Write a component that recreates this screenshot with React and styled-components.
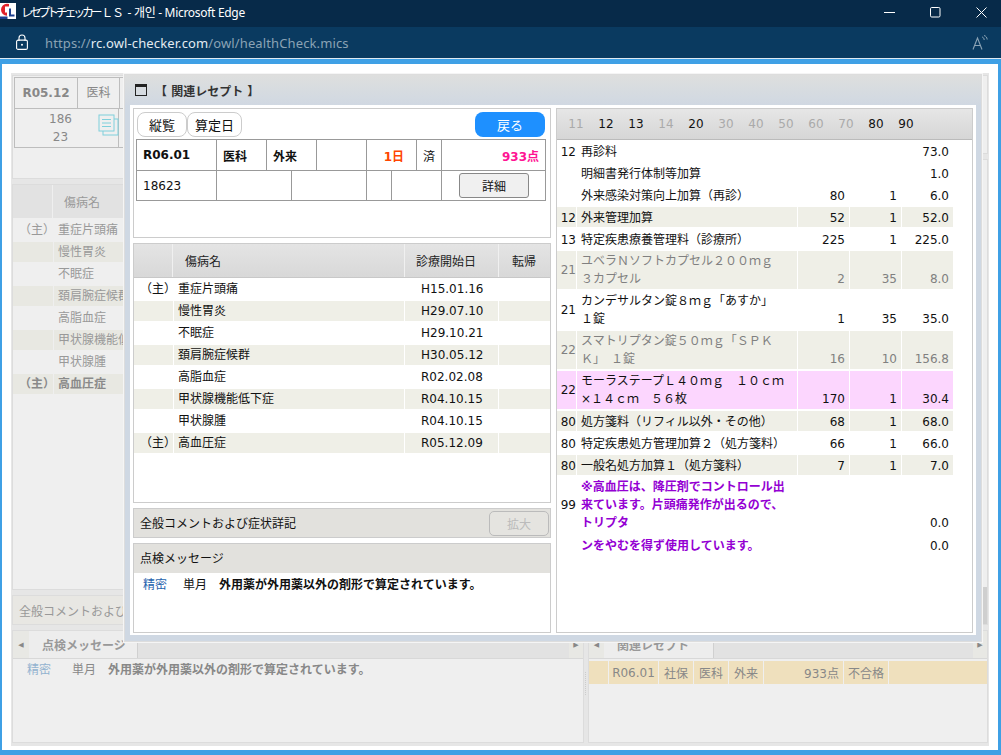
import React from "react";
import styled, { createGlobalStyle } from "styled-components";

const Global = createGlobalStyle`
  html, body { margin: 0; padding: 0; height: 755px; overflow: hidden; background: #fff; }
  #root { height: 755px; }
  * { box-sizing: border-box; }
  body { font-family: "DejaVu Sans", "Noto Sans CJK JP", sans-serif; font-size: 12px; color: #111; }
`;

const Shell = styled.div`display:flex;flex-direction:column;height:755px;`;
const TitleBar = styled.div`height:27px;background:#072a49;display:flex;align-items:center;color:#fff;flex:none;padding-bottom:3px;`;
const Logo = styled.svg`width:16px;height:16px;margin:0 5px 2px 0;flex:none;`;
const TitleText = styled.div`font:12px "Noto Sans","Noto Sans CJK JP","Noto Sans CJK KR",sans-serif;flex:1;white-space:pre;letter-spacing:-.3px;`;
const TitleJa = styled.span`letter-spacing:-3.3px;`;
const TitleMid = styled.span`letter-spacing:-2.2px;margin-left:1px;margin-right:2px;`;
const WinControls = styled.div`display:flex;align-items:center;padding-right:14px;gap:35px;`;
const WinBtn = styled.svg`width:11px;height:11px;display:block;`;
const AddressBar = styled.div`height:31px;background:#0a3a60;display:flex;align-items:center;flex:none;padding-left:16px;`;
const Lock = styled.svg`width:12px;height:16px;margin:0 17px 2px 0;flex:none;`;
const Url = styled.div`font:13px "Noto Sans",sans-serif;color:#8ba3b5;flex:1;letter-spacing:.12px;`;
const UrlHost = styled.span`color:#e3ebf1;`;
const ReadAloud = styled.svg`width:16px;height:15px;margin-right:13px;`;
const WhiteLine = styled.div`height:1px;background:#dfe9f1;flex:none;`;
const Frame = styled.div`
  position:relative;flex:1;min-height:0;background:#fff;
  border-style:solid;border-color:#3fa0e5;border-width:5px 3px 5px 2px;
  padding:9px 9px 4px 9px;
`;
const BackPage = styled.div`
  height:100%;background:#e6e6e6;padding:2px 1px 3px 1px;
  display:grid;grid-template-columns:572px 400px;column-gap:4px;
`;
const BackColumn = styled.div`display:flex;flex-direction:column;gap:5px;min-height:0;`;
const BackCard = styled.div`background:#efefef;border:1px solid #dcdcdc;position:relative;overflow:hidden;flex:${p=>p.$grow?1:"none"};height:${p=>p.$h?`${p.$h}px`:"auto"};`;
const SummaryGrid = styled.div`display:grid;border:solid #bdbdbd;border-width:1px;margin:1px;color:#888;`;
const SummaryRow = styled.div`display:grid;grid-template-columns:${p=>p.$cols};height:${p=>p.$h}px;border-top:${p=>p.$top?"1px solid #bdbdbd":"none"};`;
const SummaryCell = styled.div`
  border-right:1px solid #bdbdbd;display:flex;align-items:center;justify-content:${p=>p.$center?"center":"flex-start"};
  font-weight:${p=>p.$bold?700:400};white-space:nowrap;position:relative;line-height:18px;
`;
const Stacked = styled.div`padding-left:29px;text-align:center;width:62px;`;
const DocIcon = styled.svg`position:absolute;left:83px;top:5px;width:21px;height:22px;`;
const BackHead = styled.div`display:grid;grid-template-columns:40px 1fr;height:33px;background:#e2e2e2;color:#999;`;
const BackHeadCell = styled.div`border-right:1px solid #efefef;display:flex;align-items:center;padding-left:11px;`;
const BackRows = styled.div`display:flex;flex-direction:column;gap:2px;padding-top:2px;`;
const BackRow = styled.div`display:grid;grid-template-columns:40px 1fr;height:20px;gap:1px;line-height:20px;color:#999;`;
const BackCell = styled.div`background:${p=>p.$band?"#e8e8e2":"transparent"};white-space:nowrap;padding-left:${p=>p.$pad||0}px;font-weight:${p=>p.$bold?700:400};color:${p=>p.$bold?"#8a8a8a":"inherit"};`;
const BarText = styled.div`height:28px;padding-left:6px;display:flex;align-items:center;color:#999;white-space:nowrap;background:#e8e7e3;`;
const BackScroll = styled.div`position:absolute;right:0;bottom:0;width:5px;height:37px;background:#cfcfcf;`;
const TabPanel = styled.div`flex:none;height:113px;background:#efefef;border:1px solid #dcdcdc;display:flex;flex-direction:column;min-height:0;`;
const TabStrip = styled.div`height:28px;background:#e2e2e2;display:flex;flex:none;border-bottom:1px solid #d8d8d8;color:#999;`;
const Arrow = styled.div`width:${p=>p.$w||16}px;flex:none;display:flex;align-items:center;justify-content:center;background:#e8e8e4;color:#888;font-size:7px;`;
const Tab = styled.div`width:${p=>p.$w}px;background:#ededed;border-right:1px solid #d0d0d0;padding-left:13px;display:flex;align-items:center;font-weight:700;color:#999;white-space:nowrap;overflow:hidden;`;
const StripFill = styled.div`flex:1;`;
const BackMessage = styled.div`display:flex;padding:4px 0 0 14px;line-height:14px;color:#888;white-space:nowrap;`;
const MsgLevel = styled.span`color:${p=>p.$c};width:${p=>p.$w}px;flex:none;`;
const MsgTerm = styled.span`width:${p=>p.$w}px;flex:none;`;
const MsgBody = styled.span`font-weight:700;`;
const ReceiptRow = styled.div`display:grid;grid-template-columns:19px 49px 34px 34px 34px 79px 44px 1fr;gap:1px;height:23px;margin-top:2px;color:#888;`;
const ReceiptCell = styled.div`background:#efe0bd;display:flex;align-items:center;justify-content:${p=>p.$right?"flex-end":"center"};padding-right:${p=>p.$right?4:0}px;white-space:nowrap;`;
const Splitter = styled.div`position:absolute;left:583px;top:608px;width:1px;height:23px;border-left:1px dotted #ccc;`;

const Modal = styled.div`
  position:absolute;left:122px;top:10px;width:858px;height:568px;
  background:#cfd8e3;border:1px solid #ddd;display:flex;flex-direction:column;padding:0 5px 6px 5px;
  box-shadow:0 0 0 1px #f5f5f5;
`;
const ModalHead = styled.div`
  margin:0 -5px;height:30px;flex:none;padding-left:10px;display:flex;align-items:center;gap:8px;
  background:linear-gradient(#dedfde,#d0d8e2);font-weight:700;color:#333;
`;
const WinIcon = styled.svg`width:12px;height:12px;flex:none;`;
const ModalBody = styled.div`flex:1;min-height:0;background:#fff;padding:3px 3px 2px;display:grid;grid-template-columns:418px 417px;column-gap:5px;`;
const LeftPane = styled.div`display:flex;flex-direction:column;gap:5px;min-height:0;`;
const Panel = styled.div`border:1px solid #ccc;background:#fff;flex:${p=>p.$grow?1:"none"};height:${p=>p.$h?`${p.$h}px`:"auto"};display:flex;flex-direction:column;min-height:0;`;
const ButtonRow = styled.div`height:30px;flex:none;display:flex;align-items:flex-start;padding:3px 5px 0 3px;`;
const Pill = styled.button`
  height:25px;width:${p=>p.$w}px;border:1px solid #ccc;border-radius:8px;background:#fff;font:13px "Noto Sans CJK JP",sans-serif;color:#111;padding:0;
`;
const BackButton = styled.button`
  margin-left:auto;width:70px;height:25px;border:0;border-radius:8px;background:#1e90ff;color:#fff;font:13px "Noto Sans CJK JP",sans-serif;padding:0;
`;
const InfoTable = styled.div`margin:0 4px 0 2px;border:1px solid #999;`;
const InfoRow = styled.div`display:grid;grid-template-columns:${p=>p.$cols};height:${p=>p.$h}px;border-top:${p=>p.$top?"1px solid #999":"none"};`;
const InfoCell = styled.div`
  border-right:${p=>p.$last?"none":"1px solid #999"};display:flex;align-items:center;white-space:nowrap;
  padding:${p=>p.$right?`0 ${p.$pr||6}px 0 0`:"0 0 0 6px"};justify-content:${p=>p.$right?"flex-end":"flex-start"};
  font-weight:${p=>p.$bold?700:400};color:${p=>p.$c||"#111"};
`;
const DetailBtn = styled.button`width:70px;height:25px;margin-right:11px;background:#f0f0f0;border:1px solid #888;border-radius:3px;font:12px "Noto Sans CJK JP",sans-serif;color:#111;padding:0;`;
const DiseaseHead = styled.div`display:grid;grid-template-columns:39px 232px 94px 1fr;height:34px;flex:none;background:linear-gradient(#e4e4e4,#d8d8d8);border-bottom:1px solid #c8c8c8;color:#222;`;
const DiseaseHeadCell = styled.div`border-right:1px solid #f0f0f0;display:flex;align-items:center;padding-left:${p=>p.$pad||0}px;&:last-child{border-right:0;}`;
const DiseaseRows = styled.div`display:flex;flex-direction:column;gap:2px;padding-top:1px;`;
const DiseaseRow = styled.div`display:grid;grid-template-columns:39px 230px 93px 1fr;column-gap:1px;height:20px;`;
const DiseaseCell = styled.div`background:${p=>p.$band?"#efefe7":"#fff"};line-height:20px;padding-left:${p=>p.$pad||0}px;white-space:nowrap;`;
const BarPanel = styled.div`height:30px;flex:none;border:1px solid #ccc;background:#e2e1dd;display:flex;align-items:center;padding:0 1px 0 6px;justify-content:space-between;`;
const BarLabel = styled.span`margin-bottom:2px;`;
const ExpandBtn = styled.button`width:60px;height:25px;border:1px solid #bbb;border-radius:5px;background:#e5e4e0;color:#bbb;font:12px "Noto Sans CJK JP",sans-serif;padding:0;`;
const MessageHead = styled.div`height:29px;flex:none;background:#e2e1dd;display:flex;align-items:center;padding:0 0 2px 6px;`;
const MessageBody = styled.div`display:flex;padding:5px 0 0 9px;line-height:14px;white-space:nowrap;`;
const RightPane = styled.div`border:1px solid #ccc;display:flex;flex-direction:column;min-height:0;`;
const CodeTabs = styled.div`height:31px;flex:none;display:flex;align-items:center;padding-left:4px;background:linear-gradient(#e6e6e6,#d6d6d6);border-bottom:1px solid #bbb;`;
const CodeTab = styled.div`width:30px;text-align:center;color:${p=>p.$on?"#111":"#aaa"};`;
const FeeRows = styled.div`display:flex;flex-direction:column;gap:2px;padding-top:1px;`;
const FeeRow = styled.div`display:grid;grid-template-columns:19px 220px 51px 51px 51px;column-gap:1px;`;
const FeeCell = styled.div`
  background:${p=>p.$tone==="band"?"#efefe7":p.$tone==="pink"?"#fcd6fe":"#fff"};
  color:${p=>p.$dim?"#808080":"#111"};padding:${p=>p.$multi?"1px 0":"2px 0 0"};line-height:18px;display:flex;
`;
const CodeCell = styled(FeeCell)`align-items:center;justify-content:flex-end;`;
const NameCell = styled(FeeCell)`
  padding-left:4px;flex-direction:column;white-space:pre;
  color:${p=>p.$note?"#9400d3":p.$dim?"#808080":"#111"};font-weight:${p=>p.$note?700:400};
`;
const NumCell = styled(FeeCell)`align-items:flex-end;justify-content:flex-end;padding-right:4px;`;

const diseases = [
  ["（主）","重症片頭痛","H15.01.16"],["","慢性胃炎","H29.07.10"],["","不眠症","H29.10.21"],["","頚肩腕症候群","H30.05.12"],
  ["","高脂血症","R02.02.08"],["","甲状腺機能低下症","R04.10.15"],["","甲状腺腫","R04.10.15"],["（主）","高血圧症","R05.12.09"],
];
const codes = [["11",0],["12",1],["13",1],["14",0],["20",1],["30",0],["40",0],["50",0],["60",0],["70",0],["80",1],["90",1]];
const fees = [
  {c:"12",n:["再診料"],v:["","","73.0"]},
  {n:["明細書発行体制等加算"],v:["","","1.0"]},
  {n:["外来感染対策向上加算（再診）"],v:["80","1","6.0"]},
  {c:"12",n:["外来管理加算"],v:["52","1","52.0"],t:"band"},
  {c:"13",n:["特定疾患療養管理料（診療所）"],v:["225","1","225.0"]},
  {c:"21",n:["ユベラＮソフトカプセル２００ｍｇ","３カプセル"],v:["2","35","8.0"],t:"band",d:1},
  {c:"21",n:["カンデサルタン錠８ｍｇ「あすか」","１錠"],v:["1","35","35.0"]},
  {c:"22",n:["スマトリプタン錠５０ｍｇ「ＳＰＫ","Ｋ」　１錠"],v:["16","10","156.8"],t:"band",d:1},
  {c:"22",n:["モーラステープＬ４０ｍｇ　１０ｃｍ","×１４ｃｍ　５６枚"],v:["170","1","30.4"],t:"pink"},
  {c:"80",n:["処方箋料（リフィル以外・その他）"],v:["68","1","68.0"],t:"band"},
  {c:"80",n:["特定疾患処方管理加算２（処方箋料）"],v:["66","1","66.0"]},
  {c:"80",n:["一般名処方加算１（処方箋料）"],v:["7","1","7.0"],t:"band"},
  {c:"99",n:["※高血圧は、降圧剤でコントロール出","来ています。片頭痛発作が出るので、","トリプタ"],v:["","","0.0"],note:1},
  {n:["ンをやむを得ず使用しています。"],v:["","","0.0"],note:1},
];
const receipt = ["R06.01","社保","医科","外来"];

export default function App() {
  return (
    <Shell>
      <Global />
      <TitleBar>
        <Logo viewBox="0 0 16 16">
          <rect width="16" height="16" fill="#fff" />
          <path d="M7 .8a6 6 0 1 0 0 12V9.500H5V3.500h4V1.100A6 6 0 0 0 7 .8z" fill="#e0202a" />
          <path d="M9 5.500h2v6h3.500v2H9z" fill="#1d3f8f" />
          <path d="M0 13.500h7.500V16H0z" fill="#1d3f8f" />
        </Logo>
        <TitleText><TitleJa>レセプトチェッカー</TitleJa><TitleMid> Ｌ Ｓ </TitleMid> - 개인 - Microsoft Edge</TitleText>
        <WinControls>
          <WinBtn viewBox="0 0 11 11"><path d="M0 5.500h11" stroke="#fff" /></WinBtn>
          <WinBtn viewBox="0 0 11 11"><rect x=".5" y=".5" width="9.500" height="9.500" rx="1.200" fill="none" stroke="#fff" /></WinBtn>
          <WinBtn viewBox="0 0 11 11"><path d="M.5.5l10 10M10.500.5l-10 10" stroke="#fff" fill="none" /></WinBtn>
        </WinControls>
      </TitleBar>
      <AddressBar>
        <Lock viewBox="0 0 12 16">
          <path d="M3 7V4a3 3 0 0 1 6 0v3" fill="none" stroke="#fff" strokeWidth="1.1" />
          <rect x=".6" y="6.100" width="10.800" height="9.300" rx="1.500" fill="none" stroke="#fff" strokeWidth="1.1" />
          <circle cx="6" cy="10.700" r="1" fill="#fff" />
        </Lock>
        <Url>https://<UrlHost>rc.owl-checker.com</UrlHost>/owl/healthCheck.mics</Url>
        <ReadAloud viewBox="0 0 16 15">
          <path d="M1 14.500L5.500 3l4.500 11.500M2.800 10.500h5.500" fill="none" stroke="#8ba3b5" strokeWidth="1.1" />
          <path d="M10 2c1.500.3 2 1.200 2.200 3M12 .5c2 .5 3 2 3.200 4" fill="none" stroke="#8ba3b5" />
        </ReadAloud>
      </AddressBar>
      <WhiteLine />
      <Frame>
        <BackPage>
          <BackColumn>
            <BackCard $h={104}>
              <SummaryGrid>
                <SummaryRow $cols="63px 42px 1fr" $h={30}>
                  <SummaryCell $center $bold>R05.12</SummaryCell>
                  <SummaryCell $center>医科</SummaryCell>
                  <SummaryCell />
                </SummaryRow>
                <SummaryRow $cols="104px 1fr" $h={39} $top>
                  <SummaryCell><Stacked>186<br />23</Stacked>
                    <DocIcon viewBox="0 0 21 22">
                      <rect x="5" y="5" width="15" height="16" fill="#efefef" stroke="#7fd0dc" />
                      <rect x="1" y="1" width="15" height="16" fill="#efefef" stroke="#7fd0dc" />
                      <path d="M4 5.500h9M4 9h9M4 12.500h9" stroke="#7fd0dc" />
                    </DocIcon>
                  </SummaryCell>
                  <SummaryCell />
                </SummaryRow>
              </SummaryGrid>
            </BackCard>
            <BackCard $grow>
              <BackHead><BackHeadCell /><BackHeadCell>傷病名</BackHeadCell></BackHead>
              <BackRows>
                {diseases.map((d, i) => (
                  <BackRow key={i}>
                    <BackCell $band={i % 2 === 1} $pad={6} $bold={i === 7}>{d[0]}</BackCell>
                    <BackCell $band={i % 2 === 1} $pad={4} $bold={i === 7}>{d[1]}</BackCell>
                  </BackRow>
                ))}
              </BackRows>
            </BackCard>
            <BackCard $h={30}><BarText>全般コメントおよび症状詳記</BarText></BackCard>
            <TabPanel>
              <TabStrip>
                <Arrow>◀</Arrow>
                <Tab $w={109}>点検メッセージ</Tab>
                <StripFill />
                <Arrow $w={14}>▶</Arrow>
              </TabStrip>
              <BackMessage>
                <MsgLevel $c="#93b3d0" $w={45}>精密</MsgLevel>
                <MsgTerm $w={36}>単月</MsgTerm>
                <MsgBody>外用薬が外用薬以外の剤形で算定されています。</MsgBody>
              </BackMessage>
            </TabPanel>
          </BackColumn>
          <BackColumn>
            <BackCard $h={79} />
            <BackCard $grow><BackScroll /></BackCard>
            <TabPanel>
              <TabStrip>
                <Arrow $w={15}>◀</Arrow>
                <Tab $w={110}>関連レセプト</Tab>
                <StripFill />
                <Arrow $w={14}>▶</Arrow>
              </TabStrip>
              <ReceiptRow>
                <ReceiptCell />
                {receipt.map((t) => <ReceiptCell key={t}>{t}</ReceiptCell>)}
                <ReceiptCell $right>933点</ReceiptCell>
                <ReceiptCell>不合格</ReceiptCell>
                <ReceiptCell />
              </ReceiptRow>
            </TabPanel>
          </BackColumn>
        </BackPage>
        <Splitter />
        <Modal>
          <ModalHead>
            <WinIcon viewBox="0 0 12 12"><rect x=".5" y=".5" width="11" height="11" fill="none" stroke="#222" /><rect width="12" height="3" fill="#222" /></WinIcon>
            【 関連レセプト 】
          </ModalHead>
          <ModalBody>
            <LeftPane>
              <Panel $h={130}>
                <ButtonRow>
                  <Pill $w={50}>縦覧</Pill>
                  <Pill $w={55}>算定日</Pill>
                  <BackButton>戻る</BackButton>
                </ButtonRow>
                <InfoTable>
                  <InfoRow $cols="80px 50px 50px 50px 50px 25px 1fr" $h={30}>
                    <InfoCell $bold>R06.01</InfoCell>
                    <InfoCell $bold>医科</InfoCell>
                    <InfoCell $bold>外来</InfoCell>
                    <InfoCell />
                    <InfoCell $right $pr={12} $bold $c="#ff4500">1日</InfoCell>
                    <InfoCell>済</InfoCell>
                    <InfoCell $right $bold $last $c="#ff1493">933点</InfoCell>
                  </InfoRow>
                  <InfoRow $cols="80px 75px 75px 25px 50px 1fr" $h={30} $top>
                    <InfoCell>18623</InfoCell>
                    <InfoCell /><InfoCell /><InfoCell /><InfoCell />
                    <InfoCell $right $pr={5} $last><DetailBtn>詳細</DetailBtn></InfoCell>
                  </InfoRow>
                </InfoTable>
              </Panel>
              <Panel $h={260}>
                <DiseaseHead>
                  <DiseaseHeadCell />
                  <DiseaseHeadCell $pad={12}>傷病名</DiseaseHeadCell>
                  <DiseaseHeadCell $pad={11}>診療開始日</DiseaseHeadCell>
                  <DiseaseHeadCell $pad={13}>転帰</DiseaseHeadCell>
                </DiseaseHead>
                <DiseaseRows>
                  {diseases.map((d, i) => (
                    <DiseaseRow key={i}>
                      <DiseaseCell $band={i % 2 === 1} $pad={6}>{d[0]}</DiseaseCell>
                      <DiseaseCell $band={i % 2 === 1} $pad={4}>{d[1]}</DiseaseCell>
                      <DiseaseCell $band={i % 2 === 1} $pad={16}>{d[2]}</DiseaseCell>
                      <DiseaseCell $band={i % 2 === 1} />
                    </DiseaseRow>
                  ))}
                </DiseaseRows>
              </Panel>
              <BarPanel>
                <BarLabel>全般コメントおよび症状詳記</BarLabel>
                <ExpandBtn>拡大</ExpandBtn>
              </BarPanel>
              <Panel $grow>
                <MessageHead>点検メッセージ</MessageHead>
                <MessageBody>
                  <MsgLevel $c="#1f63ad" $w={40}>精密</MsgLevel>
                  <MsgTerm $w={36}>単月</MsgTerm>
                  <MsgBody>外用薬が外用薬以外の剤形で算定されています。</MsgBody>
                </MessageBody>
              </Panel>
            </LeftPane>
            <RightPane>
              <CodeTabs>
                {codes.map(([c, on]) => <CodeTab key={c} $on={on}>{c}</CodeTab>)}
              </CodeTabs>
              <FeeRows>
                {fees.map((f, i) => {
                  const multi = f.n.length > 1;
                  return (
                    <FeeRow key={i}>
                      <CodeCell $tone={f.t} $dim={f.d} $multi={multi}>{f.c}</CodeCell>
                      <NameCell $tone={f.t} $dim={f.d} $note={f.note} $multi={multi}>
                        {f.n.map((l) => <span key={l}>{l}</span>)}
                      </NameCell>
                      {f.v.map((v, j) => <NumCell key={j} $tone={f.t} $dim={f.d} $multi={multi}>{v}</NumCell>)}
                    </FeeRow>
                  );
                })}
              </FeeRows>
            </RightPane>
          </ModalBody>
        </Modal>
      </Frame>
    </Shell>
  );
}
